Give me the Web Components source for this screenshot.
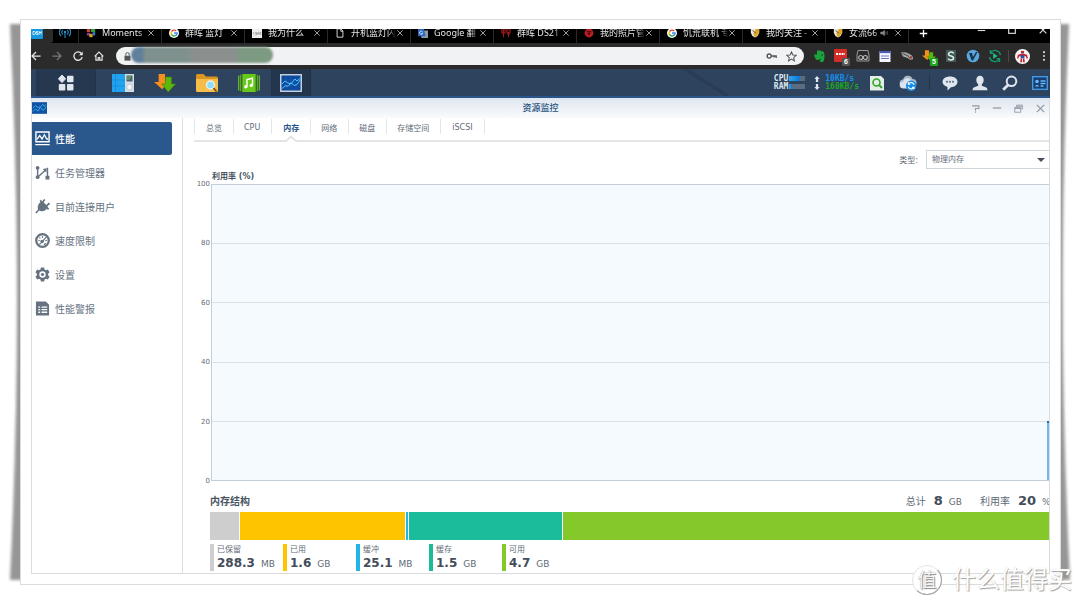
<!DOCTYPE html>
<html lang="zh-CN">
<head>
<meta charset="utf-8">
<title>资源监控</title>
<style>
  html { background: #fff; }
  body {
    margin: 0;
    font-family: "DejaVu Sans", "Noto Sans CJK SC", sans-serif;
    font-size: 8px;
    color: #5f6b78;
  }
</style>
</head>
<body>
<photo-frame>
  <browser-tabs></browser-tabs>
  <browser-toolbar></browser-toolbar>
  <desk-taskbar></desk-taskbar>
  <app-window heading="资源监控">
    <side-nav slot="nav"></side-nav>
    <panel-tabs></panel-tabs>
    <type-filter></type-filter>
    <usage-chart heading="利用率 (%)"></usage-chart>
    <memory-map></memory-map>
  </app-window>
</photo-frame>

<script>
const ICONS = {
  dsm: ['0 0 12 12', '<rect width="12" height="12" rx="1" fill="#1596de"/><path d="M2 4.500h1.500q1 0 1 1.500t-1 1.500H2zM7 4.500H5.500v1.500H7v1.500H5.300M8.200 7.500v-3l1 1.500 1-1.500v3" fill="none" stroke="#fff" stroke-width=".8"/>'],
  antenna: ['0 0 12 12', '<path d="M6 5v6M3.800 7.500a3 3 0 010-4.500M8.200 7.500a3 3 0 000-4.500M2 9a5 5 0 010-7.500M10 9a5 5 0 000-7.500" fill="none" stroke="#2b8fc4" stroke-width="1.100"/><circle cx="6" cy="5" r="1.200" fill="#2b8fc4"/>'],
  photos: ['0 0 12 12', '<rect x="1" y="1" width="4" height="4" fill="#c8452f"/><rect x="6" y="1" width="5" height="4" fill="#3a9a42"/><rect x="1" y="6" width="4" height="3" fill="#8a3b9c"/><rect x="4" y="7" width="4" height="4" fill="#d9a21d"/><rect x="8" y="5" width="3" height="4" fill="#2a7fd0"/>'],
  google: ['0 0 12 12', '<circle cx="6" cy="6" r="6" fill="#fff"/><g fill="none" stroke-width="1.700"><path d="M8.700 3.500A3.700 3.700 0 003 4.400" stroke="#ea4335"/><path d="M3 4.200a3.600 3.600 0 000 3.600" stroke="#fbbc05"/><path d="M2.900 7.700a3.700 3.700 0 005.800.8" stroke="#34a853"/><path d="M6 6h3.700q0 1.800-1.200 2.700" stroke="#4285f4"/></g>'],
  sync: ['0 0 12 12', '<rect width="12" height="12" fill="#eee"/><path d="M2 5q-1 1 0 1.500t0 1.500M4 5l1 2M6 5l-1.400 4M7 8V5.500q1-1 1.500 0V8M11 5.500q-1.500-.5-1.500 1t1.500 1" fill="none" stroke="#777" stroke-width=".8"/>'],
  page: ['0 0 12 12', '<path d="M2.500 1h4.500l2.500 2.500V11h-7zM7 1v3h2.500" fill="none" stroke="#cfcfcf" stroke-width="1.200"/>'],
  translate: ['0 0 12 12', '<rect x="4" y="3" width="8" height="9" fill="#8f9aa8"/><path d="M0 1h7l2 9H0z" fill="#2e66c4"/><path d="M5.500 4.500a2 2 0 10.300 1.800H4" fill="none" stroke="#fff" stroke-width=".9"/>'],
  red: ['0 0 12 12', '<path d="M1 2h4v4H1zM3 2v9M7 2h4v3H7zM7 7h4M9 5v6" stroke="#9d1b1f" stroke-width="1.300" fill="none"/>'],
  redball: ['0 0 12 12', '<circle cx="6" cy="6" r="5.300" fill="#c01d25"/><path d="M3 4.500h6M4 7h4M6 3v6" stroke="#35070a" stroke-width="1"/>'],
  shield: ['0 0 12 12', '<path d="M1 1h10v5q-1 4-5 5.500Q2 10 1 6z" fill="#e9e6dc"/><path d="M7 1h4v5L6 11.500 4 7z" fill="#e0a526"/><path d="M3 3l4 3" stroke="#444"/>'],
  speaker: ['0 0 12 12', '<path d="M1 4.500h2.500L7 2v8L3.500 7.500H1zM9 4v4M11 3v6" fill="#888" stroke="#888" stroke-width=".8"/>'],
  x: ['0 0 12 12', '<path d="M2 2l8 8M10 2l-8 8" stroke="currentColor" stroke-width="1.400" fill="none"/>'],
  plus: ['0 0 12 12', '<path d="M6 1v10M1 6h10" stroke="currentColor" stroke-width="1.800"/>'],
  min: ['0 0 12 12', '<path d="M1 6h10" stroke="currentColor" stroke-width="1.500"/>'],
  max: ['0 0 12 12', '<rect x="2" y="2" width="8" height="8" fill="none" stroke="currentColor" stroke-width="1.400"/>'],
  restore: ['0 0 12 12', '<path d="M3.500 4V1.500h8v5H9M1 4.500h8V11H1zM1 6h8M4 3h7" fill="none" stroke="currentColor" stroke-width="1.200"/>'],
  help: ['0 0 12 12', '<path d="M1.500 2.500h9V6H6v3M6 10v1.500" fill="none" stroke="currentColor" stroke-width="1.500"/>'],
  back: ['0 0 12 12', '<path d="M11.500 6H1.500M6 1.200L1.200 6 6 10.800" fill="none" stroke="currentColor" stroke-width="1.500"/>'],
  fwd: ['0 0 12 12', '<path d="M.5 6h10M6 1.200L10.800 6 6 10.800" fill="none" stroke="currentColor" stroke-width="1.500"/>'],
  reload: ['0 0 12 12', '<path d="M10.200 3.200A5 5 0 1011 7.300" fill="none" stroke="currentColor" stroke-width="1.600"/><path d="M11.700.5v4.500H7.200z" fill="currentColor"/>'],
  home: ['0 0 12 12', '<path d="M.8 6.500L6 1.300l5.200 5.200M2.300 5.500V11h2.800V8h1.800v3h2.800V5.500" fill="none" stroke="currentColor" stroke-width="1.400"/>'],
  lock: ['0 0 12 12', '<rect x="2" y="5" width="8" height="6.500" fill="#555"/><path d="M3.800 5V3a2.200 2.200 0 014.400 0v2" fill="none" stroke="#555" stroke-width="1.300"/>'],
  key: ['0 0 14 12', '<circle cx="4" cy="6" r="2.600" fill="none" stroke="#555" stroke-width="1.700"/><path d="M6.500 6H13v2.500M10.500 6v2" fill="none" stroke="#555" stroke-width="1.700"/>'],
  star: ['0 0 12 12', '<path d="M6 1l1.500 3.400 3.700.3-2.800 2.500.8 3.600L6 8.900l-3.200 1.900.8-3.600L.8 4.700l3.700-.3z" fill="none" stroke="#555" stroke-width="1.100"/>'],
  evernote: ['0 0 14 14', '<path d="M5 1.500h3q1 1 3 1 1.500.5 1.500 4.500 0 5-2 6H8.500q-1.500-1.500.5-2.500L8 9.500q-.5 1.500-2 1.500-3 0-4-5.500H5z" fill="#19a53b"/><circle cx="10" cy="6" r=".8" fill="#2b2b2b"/>'],
  lastpass: ['0 0 14 14', '<rect x="0" y="0" width="13" height="13" rx="1" fill="#d22d27"/><path d="M2 5h9" stroke="#fff" stroke-width="2" stroke-dasharray="2 .8"/>'],
  mask: ['0 0 14 14', '<path d="M2 1.500h10q1.500 4 1 10.500H1Q.5 5 2 1.500z" fill="none" stroke="#9a9a9a" stroke-width="1"/><circle cx="4.700" cy="8.500" r="2" fill="none" stroke="#b5b5b5" stroke-width="1.200"/><circle cx="9.300" cy="8.500" r="2" fill="none" stroke="#b5b5b5" stroke-width="1.200"/>'],
  note: ['0 0 14 14', '<rect x="1.500" y="2" width="11" height="11" fill="#f4f5ff"/><path d="M1.500 3h11" stroke="#4a56b8" stroke-width="2.200"/><path d="M3 7h8M3 9.500h8" stroke="#6a74c4" stroke-width="1"/>'],
  bird: ['0 0 14 14', '<path d="M1 3.500q4-1 7 .8l3.500 2q2 1.500 1.500 4l-3 .5-2.500-1.800L3 7.500z" fill="#a9a9a9"/><path d="M2.500 4.500l6 2.500M8 7l2.500 3" stroke="#444" stroke-width="1"/><circle cx="11" cy="8.300" r="1.200" fill="#a3412f"/>'],
  arrows: ['0 0 24 22', '<path d="M5 1h7v8h4L9 18 0 10h5z" fill="#f78f1e"/><path d="M12.500 4.500h6.500V12h4.500L15.500 21 8.500 12h4z" fill="#5cb70f" stroke="#3f8d06" stroke-width=".7"/>'],
  sbox: ['0 0 14 14', '<rect x="2" y="1" width="10" height="12" fill="#3f5a57"/><path d="M9.700 4.500Q9 3 7 3T4.500 5Q4.500 6.500 7 7t2.500 2Q9.500 11 7 11T4.300 9.500" fill="none" stroke="#e8f0ee" stroke-width="1.500"/>'],
  vball: ['0 0 14 14', '<circle cx="7" cy="7" r="6.300" fill="#5aa5dc"/><path d="M3 4h3l1 4 3-5h1.500L7 11.500H5.700z" fill="#16334e"/>'],
  cycle: ['0 0 14 14', '<path d="M12.500 6A5.600 5.600 0 002.500 3.700M1.500 8a5.600 5.600 0 0010 2.300M2.500 1v3.200h3M11.500 13V9.800h-3" fill="none" stroke="#14976c" stroke-width="1.400"/><path d="M5.200 4.300l4.500 2.700-4.500 2.700z" fill="#1fc08a"/>'],
  avatar: ['0 0 16 16', '<circle cx="8" cy="8" r="8" fill="#f4f4f4"/><path d="M6.300 2h3.400v3H6.300z" fill="#d02a34"/><path d="M3 6l3-.8h4l3 .8.800 4h-1.500l-.8-2.200H4.500L3.700 10H2.200z" fill="#ce2530"/><path d="M6 6.500h4v3.500H6z" fill="#2553a5"/><path d="M6 10h1.500v4H5.500zM8.500 10H10l.5 4h-2z" fill="#c8202d"/><circle cx="8" cy="3.600" r=".8" fill="#2553a5"/>'],
  dots: ['0 0 8 14', '<g fill="#ddd"><circle cx="4" cy="2.500" r="1.200"/><circle cx="4" cy="7" r="1.200"/><circle cx="4" cy="11.500" r="1.200"/></g>'],
  apps: ['0 0 16 16', '<g fill="#dfe6ee"><path d="M4 0l3.600 3.800L4 7.600.4 3.800z" stroke="#dfe6ee" stroke-linejoin="round"/><rect x="9" y=".8" width="6.500" height="6.500" rx="1"/><rect x=".8" y="9" width="6.500" height="6.500" rx="1"/><rect x="9" y="9" width="6.500" height="6.500" rx="1"/></g>'],
  package: ['0 0 22 18', '<rect width="13" height="18" fill="#22a3ef"/><path d="M0 6h13M0 12h13M3.500 0v18" stroke="#0f8ad6" stroke-width=".7"/><rect x="13" width="9" height="18" fill="#d5dde4"/><rect x="14.500" y="1.500" width="6" height="6" fill="#4d6172"/><path d="M15 3h4M15 5h3" stroke="#71c04c" stroke-width="1"/><circle cx="17.500" cy="13" r="2.800" fill="#f3f6f8" stroke="#a9b5bf" stroke-width=".6"/>'],
  folder: ['0 0 22 18', '<path d="M0 1.500Q0 0 1.500 0h6L10 2.500h10.500Q22 2.500 22 4v13H0z" fill="#dc9420"/><path d="M0 5h22v11.500Q22 18 20.500 18h-19Q0 18 0 16.500z" fill="#f7bd4a"/><circle cx="14.500" cy="11" r="4" fill="#8fdcfb" stroke="#e9f3f6" stroke-width="1.300"/><path d="M17.500 14l3 3.500" stroke="#7b4f12" stroke-width="1.700"/>'],
  music: ['0 0 22 18', '<path d="M.7 1.500v15M21.300 1.500v15" stroke="#67c818" stroke-width="1.200"/><path d="M2.700 .8v16.400M19.300 .8v16.400" stroke="#58b50f" stroke-width="1.200"/><rect x="4.300" y="0" width="13.400" height="18" fill="#67c818"/><path d="M9 12.500V5.500l5.500-1.300v7" fill="none" stroke="#fff" stroke-width="1.400"/><circle cx="7.900" cy="12.700" r="1.700" fill="#fff"/><circle cx="13.300" cy="11.400" r="1.700" fill="#fff"/>'],
  monitor: ['0 0 22 18', '<rect width="22" height="18" fill="#c4d0dc"/><rect x="1.500" y="1.500" width="19" height="15" fill="#0d4a9c"/><path d="M1.500 6h19M1.500 11h19M6 1.500v15M11 1.500v15M16 1.500v15" stroke="#1e63b8" stroke-width=".5"/><path d="M2 10l3-3 3 2 3 1 4-5 2 2 3.500-3M2 14.500l4-3 2 1 3-4 3 3 3-1 3.500-5" fill="none" stroke="#4cc3fa" stroke-width="1"/>'],
  monitorflat: ['0 0 22 17', '<rect width="22" height="17" fill="#0f4f9f"/><path d="M0 5.500h22M0 11h22M6 0v17M11 0v17M16 0v17" stroke="#1e67bd" stroke-width=".6"/><path d="M1 9l4-4 4 3 3-1 4-4 2 3 3-3M1 14l4-4 4 3 3-6 4 5 2-1 3-5" fill="none" stroke="#3fb3f2" stroke-width="1.200"/>'],
  docsearch: ['0 0 16 16', '<path d="M1 1h11l3 3v11.500H1z" fill="#e3eee6"/><circle cx="7.500" cy="7.500" r="3.500" fill="none" stroke="#32a52a" stroke-width="1.600"/><path d="M10 10l3 3" stroke="#32a52a" stroke-width="1.800"/>'],
  cloud: ['0 0 20 18', '<path d="M5 13a4 4 0 01-.5-8A5.500 5.500 0 0115 4.500a4 4 0 01.5 8.500z" fill="#a9b7c5"/><path d="M4.500 15a3.700 3.700 0 010-7.400A5 5 0 0114 7a4 4 0 011 8z" fill="#dbe3eb"/><circle cx="13.500" cy="12" r="5.800" fill="#158bea"/><path d="M16.800 11a3.500 3.500 0 00-6.200-1M10.200 13a3.500 3.500 0 006.200 1M10.300 8v2.300h2.300M16.700 16v-2.300h-2.300" fill="none" stroke="#fff" stroke-width="1.200"/>'],
  chat: ['0 0 16 16', '<path d="M8 1.500c4.300 0 7.500 2.200 7.500 5.300S12.500 12 9 12.200L5.500 15.500v-3.600C2.500 11.200.5 9.300.5 6.800.5 3.700 3.700 1.500 8 1.500z" fill="#e0e6ed"/><g fill="#51657e"><circle cx="5" cy="6.800" r="1"/><circle cx="8" cy="6.800" r="1"/><circle cx="11" cy="6.800" r="1"/></g>'],
  user: ['0 0 16 16', '<path d="M8 .7c2.300 0 3.700 1.700 3.700 4.200 0 1.900-.8 3.500-1.900 4.300v1.600l4.500 1.700q1 .5 1.200 2.800H.5q.2-2.300 1.200-2.800l4.500-1.700V9.200C5.100 8.400 4.300 6.800 4.300 4.900 4.300 2.400 5.700.7 8 .7z" fill="#e0e6ed"/>'],
  search: ['0 0 16 16', '<circle cx="9.500" cy="6.300" r="4.800" fill="none" stroke="#e0e6ed" stroke-width="2"/><path d="M6 9.900L1.200 14.800" stroke="#e0e6ed" stroke-width="2.800"/>'],
  widget: ['0 0 16 14', '<rect x=".7" y=".7" width="14.600" height="12.600" fill="#173e6c" stroke="#3f9aea" stroke-width="1.400"/><circle cx="5" cy="5.500" r="1.800" fill="#67b6fa"/><path d="M2.800 10.500q2.200-3.500 4.400 0z" fill="#67b6fa"/><path d="M8.500 5h5M8.500 7.500h5M8.500 10h3" stroke="#67b6fa" stroke-width="1.300"/>'],
  up: ['0 0 8 8', '<path d="M4 0l3.500 4h-2v4h-3V4h-2z" fill="#dfe6ee"/>'],
  down: ['0 0 8 8', '<path d="M4 8l3.500-4h-2V0h-3v4h-2z" fill="#dfe6ee"/>'],
  perf: ['0 0 16 16', '<path d="M1 1h14v10.500H1zM.3 14.500h15.400" fill="none" stroke="currentColor" stroke-width="1.500"/><path d="M2 9l3-4 2.500 3.500L10 4l2.500 4.500H14" fill="none" stroke="currentColor" stroke-width="1.400"/>'],
  tasks: ['0 0 16 16', '<path d="M2.800 3v10M4 12l7-6.500M13.300 3v10" fill="none" stroke="currentColor" stroke-width="1.500"/><g fill="currentColor"><circle cx="2.800" cy="3" r="2"/><circle cx="2.800" cy="13" r="2"/><path d="M8.300 4.300l3.600 3.600.6-4.500z"/><rect x="11.200" y="11.500" width="4.200" height="4"/></g>'],
  plug: ['0 0 16 16', '<path d="M3 8q1-4.500 5-5.500l5.500 5.500Q12.500 12.500 8 13q-2 .3-3.500-.7L1.500 15.500.3 14.300l3-3Q2.500 9.500 3 8z" fill="currentColor"/><path d="M8 3.500L10.500.5M12 7.500l3.500-3M5.500 1.500l9 9.500" stroke="currentColor" stroke-width="1.800"/>'],
  gauge: ['0 0 16 16', '<circle cx="8" cy="8" r="6.700" fill="none" stroke="currentColor" stroke-width="2.400"/><circle cx="7.500" cy="9" r="1.900" fill="currentColor"/><path d="M8 9l4-4.500M3.500 8H5M4.700 4.700l1 1M8 3.300V5M12.700 8H11M4.500 12l2-1M9.500 12.500l2-1.500" stroke="currentColor" stroke-width="1.300"/>'],
  gear: ['0 0 16 16', '<path d="M6.300.5h3.400l.5 2.100 1.500.8 2-.7 1.800 3-1.500 1.500v1.600l1.500 1.500-1.800 3-2-.7-1.500.8-.5 2.100H6.300l-.5-2.100-1.500-.8-2 .7-1.800-3L2 8.800V7.200L.5 5.700l1.800-3 2 .7 1.500-.8z" fill="currentColor"/><circle cx="8" cy="8" r="3.400" fill="#fff"/><circle cx="8" cy="8" r="1.700" fill="currentColor"/>'],
  report: ['0 0 16 16', '<path d="M1 .5h10.500L15 4v11.500H1z" fill="currentColor"/><path d="M3.500 6.500h2M3.500 9.200h2M3.500 12h2M7 6.500h6M7 9.200h6M7 12h6" stroke="#fff" stroke-width="1.400"/>'],
  seal: ['0 0 32 32', '<circle cx="16" cy="16" r="14.500" fill="#fff" stroke="#e4e4e4" stroke-width="1"/><path d="M6 26.500A14.500 14.500 0 0026.500 6" fill="none" stroke="#a8a8a8" stroke-width="1.200"/>']
};

class Base extends HTMLElement {
  connectedCallback() {
    if (this.shadowRoot) return;
    this.attachShadow({ mode: 'open' }).innerHTML =
      `<style>*{box-sizing:border-box}button,input,select{font:inherit;color:inherit;background:none;border:0;margin:0;padding:0}button{display:flex;align-items:center;justify-content:center}${this.css()}</style>${this.html()}`;
  }
  css() { return ''; }
  html() { return '<slot></slot>'; }
}
const icon = (n, w, h = w) => `<ui-icon name="${n}" w="${w}" h="${h}"></ui-icon>`;

customElements.define('ui-icon', class extends Base {
  css() { return `:host{display:block;flex:none}svg{display:block}`; }
  html() {
    const [box, body] = ICONS[this.getAttribute('name')];
    return `<svg aria-hidden="true" viewBox="${box}" width="${this.getAttribute('w')}" height="${this.getAttribute('h')}">${body}</svg>`;
  }
});

/* White print with lifted corners and the site's mark in its lower right */
customElements.define('photo-frame', class extends Base {
  css() { return `
    :host{display:flex;flex-direction:column;position:relative;min-height:100vh;box-sizing:border-box;padding:19px 19px 20px 20px;overflow:hidden}
    .shade{position:absolute;top:0;left:0;width:100%;height:100%}
    .paper{position:relative;flex:1;display:flex;flex-direction:column;background:#fff;border:1px solid #dcdcdc;padding:9px 10px 10px}
    .mark{position:absolute;right:8px;bottom:9px;display:flex;align-items:center;gap:9px;color:#fff;font-size:24px;line-height:32px;text-shadow:1px 1px 1px #a0a0a0,0 0 1px #ccc}
    .seal{display:grid;place-items:center}
    .seal>*{grid-area:1/1}
    .seal span{font-size:19px;color:#f4f4f4;position:relative;text-shadow:1px 1px 1px #888,0 0 1px #aaa}`; }
  html() { return `
    <svg class="shade" viewBox="0 0 1080 605" preserveAspectRatio="none" aria-hidden="true">
      <defs><filter id="b" x="-5%" y="-5%" width="110%" height="110%"><feGaussianBlur stdDeviation="1.500"/></filter></defs>
      <path d="M10 24Q24 300 10 580H40V24zM1069 24Q1056 300 1070 580H1040V24z" fill="#969696" filter="url(#b)"/>
    </svg>
    <div class="paper"><slot></slot></div>
    <div class="mark"><div class="seal">${icon('seal', 32)}<span>值</span></div><span>什么值得买</span></div>`; }
});

customElements.define('browser-tabs', class extends Base {
  css() { return `
    :host{display:flex;align-items:flex-end;height:14px;overflow:hidden;background:#000;color:#e4e4e4;font:9px "Noto Sans","Noto Sans CJK SC",sans-serif}
    .tab{display:flex;align-items:center;height:20px;flex:0 1 83px;min-width:0;border-left:1px solid #2b2b2b;padding:0 6px 0 7px}
    .pin{flex:none;width:25px;padding:0 6px;border:0}
    .on{width:22px;background:#2b2b2b;padding:0 5px 0 0;border-radius:0 0 3px}
    .t{flex:1;margin-left:6px;overflow:hidden;white-space:nowrap;line-height:10px;-webkit-mask-image:linear-gradient(90deg,#000 82%,transparent)}
    .x{color:#aaa}
    .add{border-left:1px solid #2b2b2b;height:20px;padding-left:10px;color:#fff}
    .win{display:flex;gap:17px;margin-left:auto;color:#ddd}
    .win button{width:14px;height:26px}`; }
  html() {
    const tabs = [['photos','Moments'],['google','群晖 蓝灯'],['sync','我为什么'],['page','开机蓝灯闪'],['translate','Google 翻'],['red','群晖 DS21'],['redball','我的照片管'],['google','饥荒联机 专'],['shield','我的关注 -'],['shield','女流66','s']];
    return `<div class="tab pin on">${icon('dsm', 12)}</div><div class="tab pin">${icon('antenna', 12)}</div>` +
      tabs.map(([i, t, s]) => `<div class="tab">${icon(i, 10)}<span class="t">${t}</span>${s ? icon('speaker', 8) + '<span style="width:6px"></span>' : ''}<button class="x" aria-label="关闭标签页">${icon('x', 8)}</button></div>`).join('') +
      `<button class="add" aria-label="新标签页">${icon('plus', 9)}</button>
      <div class="win"><button aria-label="最小化">${icon('min', 9)}</button><button aria-label="最大化">${icon('max', 10)}</button><button aria-label="关闭">${icon('x', 10)}</button></div>`;
  }
});

customElements.define('browser-toolbar', class extends Base {
  css() { return `
    :host{display:flex;align-items:center;height:26px;background:#2b2b2b;color:#e6e6e6;padding-right:2px;box-sizing:border-box}
    nav{display:flex;gap:11px;margin-right:12px}
    .dim{color:#777}
    .bar{position:relative;flex:1;display:flex;align-items:center;height:18px;border-radius:9px;background:#f1f2f3;padding:0 7px}
    input{flex:1;min-width:0;margin:0 12px 0 4px;outline:0}
    .key{margin-right:9px}
    .blob{position:absolute;left:15px;top:0;width:142px;height:16px;border-radius:8px;filter:blur(1px);background:linear-gradient(90deg,#5f7f9c 0 11px,#7f918e 14px 58px,#8b908e 62px 104px,#7d9a83 108px)}
    .ext{display:flex;align-items:center;gap:8px;margin-left:8px}
    .ext button{position:relative}
    .badge{position:absolute;right:-2px;bottom:-3px;font:bold 7px/8px "Liberation Sans",sans-serif;color:#fff;background:#555;border-radius:1px;padding:0 2px}
    .green{background:#1aa51f}
    i{width:1px;height:12px;background:#4c4c4c;margin:0 6px}
    .menu{margin-left:10px}`; }
  html() {
    const ext = ['evernote','lastpass','mask','note','bird','arrows','sbox','vball','cycle'];
    const badge = { lastpass: '<span class="badge">6</span>', arrows: '<span class="badge green">5</span>' };
    return `<nav><button aria-label="后退">${icon('back', 10)}</button><button class="dim" aria-label="前进">${icon('fwd', 10)}</button><button aria-label="重新加载">${icon('reload', 10)}</button><button aria-label="主页">${icon('home', 10)}</button></nav>
    <div class="bar">${icon('lock', 9)}<input type="text" aria-label="地址"><span class="key">${icon('key', 11, 10)}</span>${icon('star', 11)}<div class="blob"></div></div>
    <div class="ext">${ext.map(n => `<button aria-label="${n}">${icon(n, 14)}${badge[n] || ''}</button>`).join('')}</div>
    <i></i>${icon('avatar', 15)}<button class="menu" aria-label="菜单">${icon('dots', 8, 12)}</button>`;
  }
});

customElements.define('desk-taskbar', class extends Base {
  css() { return `
    :host{display:flex;align-items:center;height:29px;background:linear-gradient(32deg,transparent 46%,#293d57 47% 54%,transparent 55%) 67% 0/46px 100% no-repeat,#2e435e;border-bottom:2px solid #2b568c;box-sizing:border-box;padding-right:2px}
    button{height:27px}
    .apps{width:60px;margin:0 7px 0 5px;background:#26384f;border-right:1px solid #22334a}
    .app{width:40px;margin-right:2px}
    .on{background:#24364d;border:1px solid #22324a;border-width:0 1px}
    .stats{margin-left:auto;display:grid;grid-template-columns:auto 16px 8px auto;column-gap:1px;align-items:center;font:bold 8px/8px "DejaVu Sans Mono",monospace;color:#dfe6ee}
    .m{height:5px;background:#5b6c80}
    .m b{display:block;height:5px;background:linear-gradient(90deg,#28a8f5,#1175cf)}
    .stats ui-icon{margin-left:8px}
    .u{color:#178fe8;margin-left:10px}.d{color:#1ca51f;margin-left:10px}
    .tray{display:flex;align-items:center;gap:14px;margin-left:10px}
    .tray i{width:1px;height:15px;background:#22334a;margin:0 -2px}`; }
  html() {
    return `<button class="apps" aria-label="主菜单">${icon('apps', 16)}</button>
    ${[['package','套件中心'],['arrows','下载'],['folder','文件'],['music','音乐'],['monitor','资源监控']].map(([n, l]) => `<button class="app${n === 'monitor' ? ' on' : ''}" aria-label="${l}">${icon(n, 22, n === 'arrows' ? 20 : 18)}</button>`).join('')}
    <div class="stats"><span>CPU</span><div class="m"><b style="width:70%"></b></div>${icon('up', 6)}<span class="u">10KB/s</span>
    <span>RAM</span><div class="m"><b style="width:20%"></b></div>${icon('down', 6)}<span class="d">160KB/s</span></div>
    <div class="tray"><button aria-label="文件搜索">${icon('docsearch', 16)}</button><button aria-label="云同步">${icon('cloud', 18)}</button><i></i><button aria-label="消息">${icon('chat', 16)}</button><button aria-label="用户">${icon('user', 16)}</button><button aria-label="搜索">${icon('search', 16)}</button><button aria-label="小工具">${icon('widget', 16, 14)}</button></div>`;
  }
});

customElements.define('app-window', class extends Base {
  css() { return `
    :host{flex:1;display:flex;flex-direction:column;border:1px solid #d9dcdf;border-top:0;background:#fff;overflow:hidden}
    header{display:grid;grid-template-columns:1fr auto 1fr;align-items:center;height:20px;background:linear-gradient(#dfe6ef,#f9fbfc);color:#1f5180}
    h1{margin:0;font-size:9px;font-weight:500;line-height:12px}
    .ctl{display:flex;gap:12px;justify-self:end;color:#929aa3;padding-right:3px}
    .body{flex:1;display:flex}
    main{flex:1;min-width:0;display:flex;flex-direction:column;padding:1px 0 2px 11px}`; }
  html() { return `<header>${icon('monitorflat', 15, 12)}<h1>${this.getAttribute('heading')}</h1>
    <div class="ctl"><button aria-label="帮助">${icon('help', 9)}</button><button aria-label="最小化">${icon('min', 10)}</button><button aria-label="还原">${icon('restore', 9)}</button><button aria-label="关闭">${icon('x', 11)}</button></div></header>
    <div class="body"><slot name="nav"></slot><main><slot></slot></main></div>`; }
});

customElements.define('side-nav', class extends Base {
  css() { return `
    :host{display:block;width:151px;box-sizing:border-box;padding:4px 10px 0 0;border-right:1px solid #dde0e3}
    nav{display:grid;gap:1px}
    a{display:flex;align-items:center;gap:5px;height:33px;padding-left:3px;font-size:10px;text-decoration:none;color:#66727f}
    a.on{background:#2a588c;color:#fff;border-radius:0 2px 2px 0;font-weight:500}`; }
  html() {
    return '<nav>' + [['perf','性能'],['tasks','任务管理器'],['plug','目前连接用户'],['gauge','速度限制'],['gear','设置'],['report','性能警报']]
      .map(([i, t], k) => `<a href="#${i}"${k ? '' : ' class="on" aria-current="page"'}>${icon(i, 15)}<span>${t}</span></a>`).join('') + '</nav>';
  }
});

customElements.define('panel-tabs', class extends Base {
  css() { return `
    :host{display:block;border-bottom:2px solid #e3e5e7;padding-bottom:6px;margin-bottom:8px}
    div{display:flex;border-left:1px solid #e3e6e9}
    button{position:relative;height:15px;padding:2px 11px 0 10px;border-right:1px solid #e3e6e9;white-space:nowrap}
    button:first-child,button:last-child{padding-left:11px}
    .on{color:#25568a;font-weight:bold;padding-left:11px}
    svg{position:absolute;left:50%;margin-left:-7px;top:16px}`; }
  html() {
    return '<div role="tablist">' + ['总览','CPU','内存','网络','磁盘','存储空间','iSCSI'].map(t => t === '内存'
      ? `<button role="tab" aria-selected="true" class="on">${t}<svg width="14" height="8" viewBox="0 0 14 8" aria-hidden="true"><path d="M1 6L7 1l6 5v2H1z" fill="#fff"/><path d="M0 6h2l5-4.500L12 6h2" fill="none" stroke="#dcdfe2" stroke-width="1.500"/></svg></button>`
      : `<button role="tab">${t}</button>`).join('') + '</div>';
  }
});

customElements.define('type-filter', class extends Base {
  css() { return `
    :host{display:flex;justify-content:flex-end;align-items:center;gap:8px;height:19px}
    .box{display:grid;align-items:center;width:123px;height:19px;border:1px solid #cfd6dc;border-right:0}
    .box>*{grid-area:1/1}
    select{appearance:none;height:17px;padding:0 20px 0 5px;outline:0}
    svg{justify-self:end;margin-right:4px;pointer-events:none}`; }
  html() { return `<label for="t">类型:</label><div class="box"><select id="t"><option>物理内存</option></select><svg width="8" height="4" viewBox="0 0 8 4" aria-hidden="true"><path d="M0 0h8L4 4z" fill="#46515d"/></svg></div>`; }
});

customElements.define('usage-chart', class extends Base {
  css() { return `
    :host{flex:1;min-height:200px;display:flex;flex-direction:column}
    h2{margin:0 0 0 18px;font-size:8px;line-height:15px;color:#4a5562}
    .c{flex:1;display:flex}
    .y{width:17px;display:flex;flex-direction:column;justify-content:space-between;text-align:right;padding-right:1px;box-sizing:border-box;font-size:7px}
    .y span{line-height:0;height:0}
    .p{flex:1;display:grid;border:solid #c3ced9;border-width:0 0 1px 1px;background:#f5faff}
    .g,.s{grid-area:1/1}
    .g{display:flex;flex-direction:column}
    .g i{flex:1;border-top:1px solid #dbe1e7}
    .g i:first-child{border-color:#c3ced9}
    .s{align-self:end;justify-self:end;width:2px;height:20%;background:#6db9ef;border-top:2px solid #1f6fb5}`; }
  html() { return `<h2>${this.getAttribute('heading')}</h2><div class="c"><div class="y">${[100,80,60,40,20,0].map(n => `<span>${n}</span>`).join('')}</div><div class="p"><div class="g"><i></i><i></i><i></i><i></i><i></i></div><div class="s"></div></div></div>`; }
});

customElements.define('memory-map', class extends Base {
  css() { return `
    :host{display:block;padding-left:16px}
    header{display:flex;align-items:baseline;height:20px;margin-top:11px;font-size:10px;line-height:18px;white-space:nowrap}
    h2{margin:0 auto 0 0;font-size:10px;color:#4a5562}
    b{font-size:13px;color:#434d5a;margin:0 6px 0 8px}
    small{font-size:9px}
    .gap{margin-left:18px}
    .pc{width:7px}
    .bar{display:flex;gap:1px;height:28px}
    .bar i{background:var(--c);flex:var(--n) 1 0}
    ul{display:flex;gap:3px;list-style:none;margin:4px 0 0;padding:0}
    li{width:70px;height:27px;box-sizing:border-box;border-left:4px solid var(--c);padding-left:3px;white-space:nowrap;line-height:11px}
    li div{line-height:16px}
    li b{font-size:12px;margin:0 6px 0 0}`; }
  html() {
    const m = [['已保留','288.3','MB','#cecece',29],['已用','1.6','GB','#ffc400',165],['缓冲','25.1','MB','#22b6e8',2],['缓存','1.5','GB','#1abc9c',153],['可用','4.7','GB','#84c829',486]];
    return `<header><h2>内存结构</h2><span>总计</span><b>8</b><small>GB</small><span class="gap">利用率</span><b>20</b><small class="pc">%</small></header>
    <div class="bar">${m.map(r => `<i style="--c:${r[3]};--n:${r[4]}"></i>`).join('')}</div>
    <ul>${m.map(r => `<li style="--c:${r[3]}">${r[0]}<div><b>${r[1]}</b><small>${r[2]}</small></div></li>`).join('')}</ul>`;
  }
});
</script>
</body>
</html>
